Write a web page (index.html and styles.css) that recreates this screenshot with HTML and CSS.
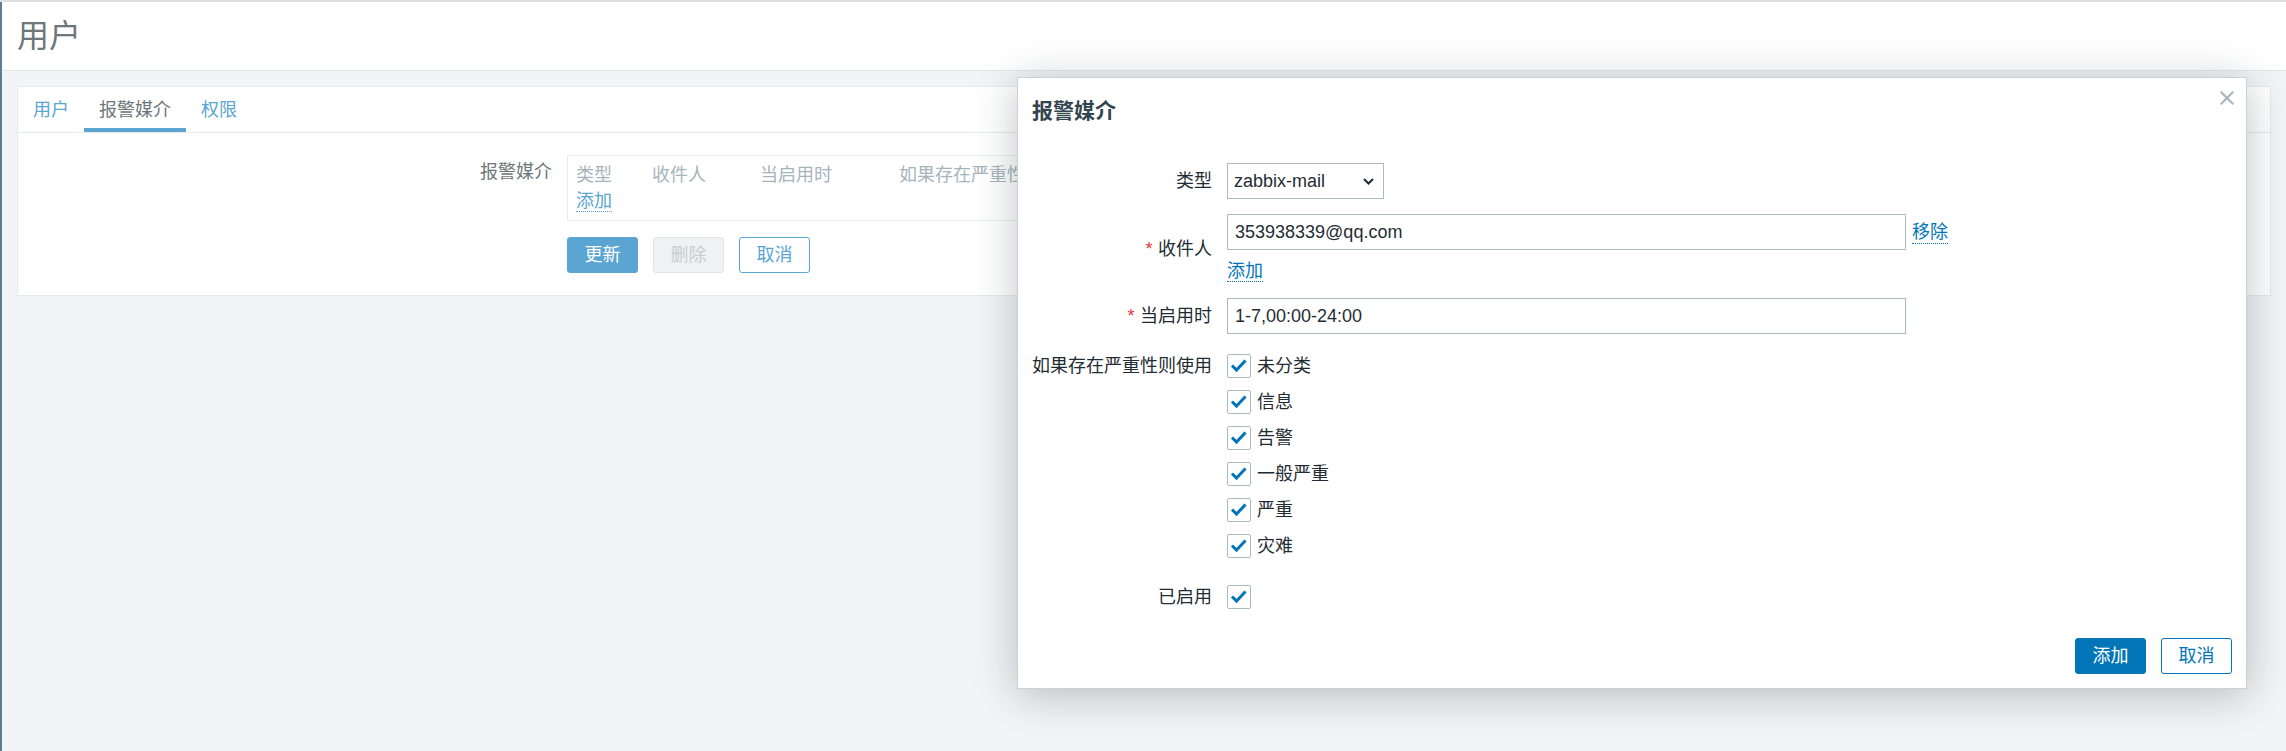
FILE: index.html
```html
<!DOCTYPE html>
<html lang="zh-CN">
<head>
<meta charset="utf-8">
<title>用户</title>
<link rel="stylesheet" href="styles.css">
</head>
<body>
<div class="topline"></div>
<div class="page">
  <header class="page-header"><h1>用户</h1></header>
  <main class="content">
    <section class="card">
      <nav class="tabs">
        <a class="tab">用户</a>
        <a class="tab active">报警媒介</a>
        <a class="tab">权限</a>
      </nav>
      <div class="tab-body">
        <div class="form-row">
          <div class="form-label">报警媒介</div>
          <div class="form-field">
            <div class="media-table">
              <div class="mt-head">
                <span class="c1">类型</span>
                <span class="c2">收件人</span>
                <span class="c3">当启用时</span>
                <span class="c4">如果存在严重性则使用</span>
              </div>
              <div class="mt-foot"><a class="bg-link">添加</a></div>
            </div>
            <div class="btn-row">
              <button class="bbtn primary">更新</button>
              <button class="bbtn disabled">删除</button>
              <button class="bbtn outline">取消</button>
            </div>
          </div>
        </div>
      </div>
    </section>
  </main>
</div>

<div class="dialog">
  <h4 class="dialog-title">报警媒介</h4>
  <span class="dialog-close"><svg width="14" height="14" viewBox="0 0 14 14"><path d="M1.5 1.5 L12.5 12.5 M12.5 1.5 L1.5 12.5" stroke="#a9b6bd" stroke-width="2.2" stroke-linecap="square"/></svg></span>
  <div class="dform">
    <div class="drow r-type">
      <label class="dlabel">类型</label>
      <div class="dctrl">
        <div class="select"><span>zabbix-mail</span><svg width="11" height="7" viewBox="0 0 11 7"><path d="M1 1 L5.5 5.5 L10 1" fill="none" stroke="#1f2c33" stroke-width="2"/></svg></div>
      </div>
    </div>
    <div class="drow r-to">
      <label class="dlabel"><span class="req">*</span>收件人</label>
      <div class="dctrl">
        <div class="inline">
          <div class="input">353938339@qq.com</div>
          <a class="link rm">移除</a>
        </div>
        <div class="add-line"><a class="link">添加</a></div>
      </div>
    </div>
    <div class="drow r-period">
      <label class="dlabel"><span class="req">*</span>当启用时</label>
      <div class="dctrl"><div class="input">1-7,00:00-24:00</div></div>
    </div>
    <div class="drow r-sev">
      <label class="dlabel top">如果存在严重性则使用</label>
      <div class="dctrl checklist">
        <div class="cb"><span class="box"><svg width="22" height="22" viewBox="0 0 22 22"><path d="M4 10.5 L8.5 15 L17.5 5.5" fill="none" stroke="#0275b8" stroke-width="3"/></svg></span><span>未分类</span></div>
        <div class="cb"><span class="box"><svg width="22" height="22" viewBox="0 0 22 22"><path d="M4 10.5 L8.5 15 L17.5 5.5" fill="none" stroke="#0275b8" stroke-width="3"/></svg></span><span>信息</span></div>
        <div class="cb"><span class="box"><svg width="22" height="22" viewBox="0 0 22 22"><path d="M4 10.5 L8.5 15 L17.5 5.5" fill="none" stroke="#0275b8" stroke-width="3"/></svg></span><span>告警</span></div>
        <div class="cb"><span class="box"><svg width="22" height="22" viewBox="0 0 22 22"><path d="M4 10.5 L8.5 15 L17.5 5.5" fill="none" stroke="#0275b8" stroke-width="3"/></svg></span><span>一般严重</span></div>
        <div class="cb"><span class="box"><svg width="22" height="22" viewBox="0 0 22 22"><path d="M4 10.5 L8.5 15 L17.5 5.5" fill="none" stroke="#0275b8" stroke-width="3"/></svg></span><span>严重</span></div>
        <div class="cb"><span class="box"><svg width="22" height="22" viewBox="0 0 22 22"><path d="M4 10.5 L8.5 15 L17.5 5.5" fill="none" stroke="#0275b8" stroke-width="3"/></svg></span><span>灾难</span></div>
      </div>
    </div>
    <div class="drow r-enabled">
      <label class="dlabel">已启用</label>
      <div class="dctrl">
        <div class="cb"><span class="box"><svg width="22" height="22" viewBox="0 0 22 22"><path d="M4 10.5 L8.5 15 L17.5 5.5" fill="none" stroke="#0275b8" stroke-width="3"/></svg></span></div>
      </div>
    </div>
  </div>
  <div class="dfooter">
    <button class="dbtn primary">添加</button>
    <button class="dbtn outline">取消</button>
  </div>
</div>
</body>
</html>
```

FILE: styles.css
```css
* { box-sizing: border-box; }

html, body {
  margin: 0;
  height: 100%;
}

body {
  background: #f2f4f5;
  font-family: "Liberation Sans", "Noto Sans CJK SC", sans-serif;
  font-size: 18px;
  color: #1f2c33;
  overflow: hidden;
  position: relative;
}

a { text-decoration: none; }

.topline {
  height: 2px;
  background: #dedfe0;
}

.page {
  border-left: 2px solid #5b7f9b;
  height: calc(100% - 2px);
}

.page-header {
  background: #ffffff;
  height: 69px;
  border-bottom: 1px solid #e3e7ea;
  display: flex;
  align-items: center;
  padding: 0 15px;
}

.page-header h1 {
  margin: 0;
  font-size: 32px;
  font-weight: normal;
  color: #6d7679;
  line-height: 40px;
}

.content {
  padding: 15px;
}

.card {
  background: #ffffff;
  border: 1px solid #e6eaec;
}

.tabs {
  display: flex;
  height: 46px;
  border-bottom: 1px solid #e6eaec;
}

.tab {
  display: flex;
  align-items: center;
  padding: 0 15px;
  color: #5aa5d1;
  line-height: 24px;
}

.tab.active {
  color: #6d7679;
  box-shadow: inset 0 -4px 0 #5aa5d1;
}

.tab-body {
  padding: 22px 0 22px;
}

.form-row {
  display: grid;
  grid-template-columns: 534px 1fr;
  column-gap: 15px;
}

.form-label {
  text-align: right;
  line-height: 24px;
  padding-top: 5px;
  color: #6d7679;
}

.media-table {
  width: 1200px;
  border: 1px solid #e8ecee;
  padding: 7px 8px;
}

.mt-head {
  display: flex;
  line-height: 24px;
  margin-bottom: 2px;
  color: #a6b5bc;
  white-space: nowrap;
}

.mt-head .c1 { width: 76px; }
.mt-head .c2 { width: 108px; }
.mt-head .c3 { width: 139px; }
.mt-head .c4 { width: 240px; }

.mt-foot { line-height: 24px; }

.bg-link {
  color: #5aa5d1;
  border-bottom: 1px dotted #5aa5d1;
}

.btn-row {
  display: flex;
  gap: 15px;
  margin-top: 16px;
}

.bbtn, .dbtn {
  width: 71px;
  height: 36px;
  font-family: inherit;
  font-size: 18px;
  border-radius: 3px;
  padding: 0;
  line-height: 34px;
}

.bbtn.primary {
  background: #5aa5d1;
  border: 1px solid #5aa5d1;
  color: #ffffff;
}

.bbtn.disabled {
  background: #f0f1f2;
  border: 1px solid #e1e4e6;
  color: #c6ced2;
}

.bbtn.outline {
  background: #ffffff;
  border: 1px solid #5aa5d1;
  color: #5aa5d1;
}

/* dialog */
.dialog {
  position: absolute;
  left: 1017px;
  top: 77px;
  width: 1230px;
  height: 612px;
  background: #ffffff;
  border: 1px solid #c9d1d6;
  box-shadow: 0 6px 40px rgba(31, 44, 51, 0.28);
  display: flex;
  flex-direction: column;
}

.dialog-title {
  margin: 0;
  padding: 19px 14px 0;
  font-size: 21px;
  line-height: 27px;
  font-weight: bold;
  color: #34444f;
}

.dialog-close {
  position: absolute;
  top: 13px;
  right: 12px;
  width: 14px;
  height: 14px;
  display: block;
}

.dialog-close svg { display: block; }

.dform {
  margin-top: 39px;
  padding: 0 14px;
}

.drow {
  display: grid;
  grid-template-columns: 180px 1fr;
  column-gap: 15px;
}

.r-type { margin-bottom: 15px; }
.r-to { margin-bottom: 15px; }
.r-period { margin-bottom: 20px; }
.r-sev { margin-bottom: 27px; }

.dlabel {
  text-align: right;
  line-height: 24px;
  align-self: center;
  white-space: nowrap;
  color: #1f2c33;
}

.dlabel.top { align-self: start; }

.req {
  color: #e33734;
  margin-right: 0.3em;
}

.select {
  width: 157px;
  height: 36px;
  border: 1px solid #acbbc2;
  display: flex;
  align-items: center;
  justify-content: space-between;
  padding: 0 9px 0 6px;
}

.select svg { display: block; }

.inline {
  display: flex;
  align-items: center;
}

.input {
  width: 679px;
  height: 36px;
  border: 1px solid #acbbc2;
  padding: 0 7px;
  line-height: 34px;
  color: #1f2c33;
}

.link {
  color: #0275b8;
  border-bottom: 1px dotted #0275b8;
  line-height: 22px;
}

.rm { margin-left: 6px; }

.add-line {
  margin-top: 9px;
  line-height: 24px;
}

.checklist {
  display: flex;
  flex-direction: column;
  gap: 12px;
}

.cb {
  display: flex;
  align-items: center;
  gap: 6px;
  line-height: 24px;
}

.box {
  width: 24px;
  height: 24px;
  border: 1px solid #acbbc2;
  border-radius: 2px;
  display: block;
}

.box svg { display: block; }

.dfooter {
  margin-top: auto;
  display: flex;
  justify-content: flex-end;
  gap: 15px;
  padding: 0 14px 14px;
}

.dbtn.primary {
  background: #0275b8;
  border: 1px solid #0275b8;
  color: #ffffff;
}

.dbtn.outline {
  background: #ffffff;
  border: 1px solid #0275b8;
  color: #0275b8;
}
```
